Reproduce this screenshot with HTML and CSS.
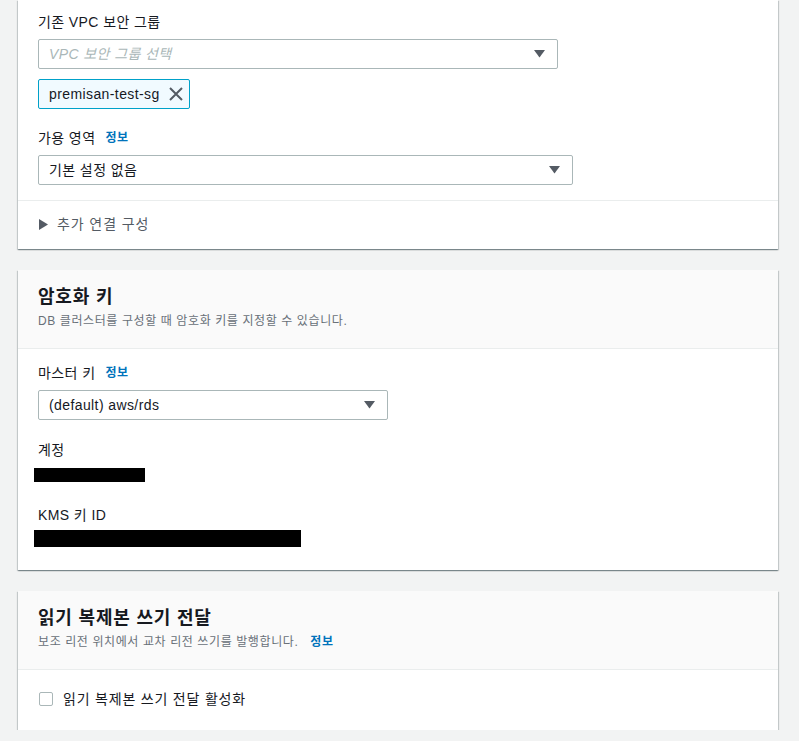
FILE: index.html
```html
<!DOCTYPE html>
<html lang="ko">
<head>
<meta charset="utf-8">
<link rel="stylesheet" href="styles.css">
</head>
<body>
<div class="page">
  <section class="card">
    <div class="card-body first">
      <div class="label">기존 VPC 보안 그룹</div>
      <div class="select w520 placeholder">
        <span>VPC 보안 그룹 선택</span>
        <svg class="caret" width="11" height="8" viewBox="0 0 11 8"><path d="M0 0H11L5.5 7.5Z" fill="#545b64"/></svg>
      </div>
      <div class="token">
        <span>premisan-test-sg</span>
        <svg class="x" width="14" height="14" viewBox="0 0 14 14"><path d="M1 1L13 13M13 1L1 13" stroke="#545b64" stroke-width="2"/></svg>
      </div>
      <div class="label mt18">가용 영역 <a class="info">정보</a></div>
      <div class="select w535">
        <span>기본 설정 없음</span>
        <svg class="caret" width="11" height="8" viewBox="0 0 11 8"><path d="M0 0H11L5.5 7.5Z" fill="#545b64"/></svg>
      </div>
    </div>
    <div class="expander">
      <svg class="tri" width="9" height="11" viewBox="0 0 9 11"><path d="M0 0L9 5.5L0 11Z" fill="#545b64"/></svg>
      <span>추가 연결 구성</span>
    </div>
  </section>

  <section class="card">
    <header class="card-head">
      <h2>암호화 키</h2>
      <p>DB 클러스터를 구성할 때 암호화 키를 지정할 수 있습니다.</p>
    </header>
    <div class="card-body second">
      <div class="label">마스터 키 <a class="info">정보</a></div>
      <div class="select w350">
        <span>(default) aws/rds</span>
        <svg class="caret" width="11" height="8" viewBox="0 0 11 8"><path d="M0 0H11L5.5 7.5Z" fill="#545b64"/></svg>
      </div>
      <div class="label mt19">계정</div>
      <div class="redact r1"></div>
      <div class="label mt22">KMS 키 ID</div>
      <div class="redact r2"></div>
    </div>
  </section>

  <section class="card">
    <header class="card-head">
      <h2>읽기 복제본 쓰기 전달</h2>
      <p>보조 리전 위치에서 교차 리전 쓰기를 발행합니다. <a class="info">정보</a></p>
    </header>
    <div class="card-body third">
      <label class="check"><span class="box"></span><span>읽기 복제본 쓰기 전달 활성화</span></label>
    </div>
  </section>
</div>
</body>
</html>
```

FILE: styles.css
```css
* { box-sizing: border-box; }
html, body { margin: 0; padding: 0; }
body {
  background: #f2f3f3;
  font-family: "Liberation Sans", "Noto Sans CJK KR", sans-serif;
  font-size: 14px;
  line-height: 22px;
  letter-spacing: 0.4px;
  color: #16191f;
}
.page {
  width: 760px;
  margin-left: 18px;
  display: flex;
  flex-direction: column;
  gap: 21px;
}
.card {
  background: #fff;
  box-shadow: 0 1px 1px 0 rgba(0, 28, 36, 0.3), 1px 1px 1px 0 rgba(0, 28, 36, 0.15), -1px 1px 1px 0 rgba(0, 28, 36, 0.15);
}
.card-head {
  background: #fafafa;
  padding: 14px 20px 18px;
  border-bottom: 1px solid #eaeded;
}
.card-head h2 {
  margin: 0;
  font-size: 18px;
  line-height: 26px;
  font-weight: 700;
  letter-spacing: 0.8px;
  color: #16191f;
}
.card-head p {
  margin: 2px 0 0;
  font-size: 12px;
  line-height: 18px;
  letter-spacing: 0.6px;
  color: #687078;
}
.card-head p .info { margin-left: 8px; }
.card-body { padding: 0 20px; }
.card-body.first { padding-top: 11px; padding-bottom: 15px; border-bottom: 1px solid #eaeded; }
.card-body.second { padding-top: 13px; padding-bottom: 23px; }
.card-body.third { padding-top: 18px; padding-bottom: 20px; }
.label { display: flex; align-items: center; }
.mt18 { margin-top: 18px; }
.mt19 { margin-top: 19px; }
.mt22 { margin-top: 22px; }
.info {
  font-size: 12px;
  font-weight: 700;
  letter-spacing: 0.6px;
  color: #0073bb;
  margin-left: 10px;
  text-decoration: none;
}
.select {
  margin-top: 6px;
  height: 30px;
  border: 1px solid #aab7b8;
  border-radius: 2px;
  background: #fff;
  display: flex;
  align-items: center;
  justify-content: space-between;
  padding: 0 12px 0 10px;
}
.select.placeholder span { color: #aab7b8; font-style: italic; }
.caret { flex: none; }
.w520 { width: 520px; }
.w535 { width: 535px; }
.w350 { width: 350px; }
.token {
  margin-top: 10px;
  width: 152px;
  height: 30px;
  border: 1px solid #00a1c9;
  border-radius: 2px;
  background: #f1faff;
  display: flex;
  align-items: center;
  justify-content: space-between;
  padding: 0 6px 0 10px;
}
.expander {
  padding: 12px 20px 14px 21px;
  display: flex;
  align-items: center;
  gap: 9px;
  color: #545b64;
  letter-spacing: 0.9px;
}
.redact { background: #000; margin-left: -4px; }
.r1 { width: 111px; height: 14px; margin-top: 7px; }
.r2 { width: 267px; height: 17px; margin-top: 4px; }
.check { display: flex; align-items: center; gap: 10px; letter-spacing: 0.8px; }
.box {
  width: 14px;
  height: 14px;
  border: 1px solid #aab7b8;
  border-radius: 2px;
  background: #fff;
  margin-left: 1px;
}
```
